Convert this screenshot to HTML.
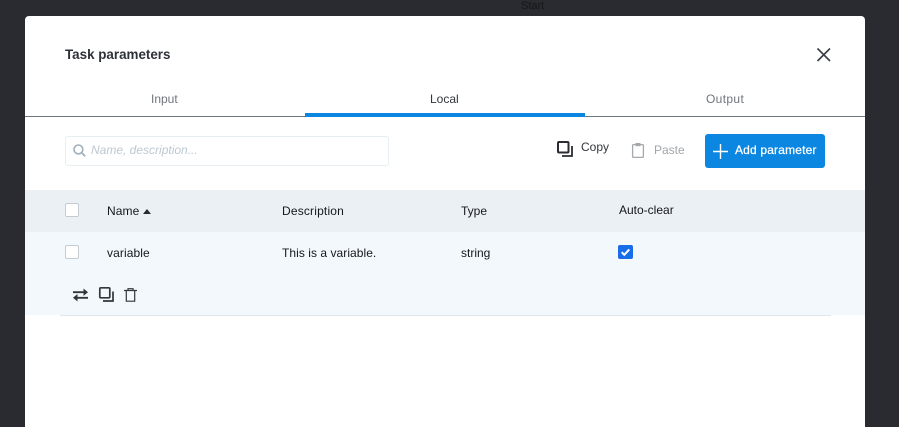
<!DOCTYPE html>
<html>
<head>
<meta charset="utf-8">
<style>
html,body{margin:0;padding:0;width:899px;height:427px;overflow:hidden;background:#2a2b30;font-family:"Liberation Sans",sans-serif;}
.a{position:absolute;white-space:nowrap;line-height:16px;}
#m{position:absolute;left:25px;top:16px;width:840px;height:411px;background:#fff;border-radius:4px 4px 0 0;}
.cb{position:absolute;left:65px;width:12px;height:12px;background:#fff;border:1px solid #c3ccd3;border-radius:2px;}
.t{font-size:12px;color:#15181c;}
svg{position:absolute;overflow:visible;}
</style>
</head>
<body>
<div class="a" style="left:521px;top:-2px;font-size:11px;color:#1a1b1e;-webkit-text-stroke:.2px #1a1b1e;">Start</div>
<div id="m"></div>

<div class="a" style="left:65px;top:47px;font-size:13.4px;font-weight:bold;color:#2e3138;">Task parameters</div>
<svg style="left:817px;top:48px" width="13" height="13" viewBox="0 0 13 13"><path d="M.5.5l12.500 12.500M13 .5L.5 13" stroke="#3a3d44" stroke-width="1.600" fill="none"/></svg>

<div class="a" style="left:151px;top:91px;font-size:12px;color:#70757b;">Input</div>
<div class="a" style="left:430px;top:91px;font-size:12px;color:#33363c;">Local</div>
<div class="a" style="left:706px;top:91px;font-size:12px;color:#70757b;letter-spacing:.35px;">Output</div>
<div style="position:absolute;left:25px;top:116px;width:840px;height:1px;background:#6f7780;"></div>
<div style="position:absolute;left:305px;top:113px;width:280px;height:4px;background:#0b87e2;"></div>

<div style="position:absolute;left:65px;top:136px;width:322px;height:28px;border:1px solid #e8eff3;border-radius:3px;background:#fff;"></div>
<svg style="left:73px;top:144px" width="13" height="13" viewBox="0 0 13 13"><circle cx="5.400" cy="5.400" r="4.400" stroke="#9fb0bb" stroke-width="1.600" fill="none"/><path d="M8.600 8.600l3.600 3.600" stroke="#9fb0bb" stroke-width="1.800" fill="none"/></svg>
<div class="a" style="left:91px;top:142px;font-size:12px;font-style:italic;color:#bcc8d1;">Name, description...</div>

<svg style="left:557px;top:141px" width="16" height="16" viewBox="0 0 16 16"><rect x="1" y="1" width="10.500" height="10.500" rx="1" stroke="#2a2c31" stroke-width="2" fill="none"/><path d="M15 5v10H5" stroke="#2a2c31" stroke-width="1.800" fill="none"/></svg>
<div class="a" style="left:581px;top:139px;font-size:12px;color:#33363c;">Copy</div>

<svg style="left:632px;top:143px" width="12" height="15" viewBox="0 0 12 15"><rect x=".6" y="1.600" width="10.800" height="12.800" rx="1" stroke="#a5a8ac" stroke-width="1.300" fill="none"/><rect x="3.500" y="0" width="5" height="3.200" fill="#a5a8ac"/></svg>
<div class="a" style="left:654px;top:142px;font-size:12px;color:#a2a6aa;">Paste</div>

<div style="position:absolute;left:705px;top:134px;width:120px;height:34px;background:#0b87e2;border-radius:3px;"></div>
<svg style="left:713px;top:144px" width="15" height="15" viewBox="0 0 15 15"><path d="M7.500 0v15M0 7.500h15" stroke="#fff" stroke-width="1.400" fill="none"/></svg>
<div class="a" style="left:735px;top:142px;font-size:12px;color:#fff;letter-spacing:.17px;-webkit-text-stroke:.25px #fff;">Add parameter</div>

<div style="position:absolute;left:25px;top:190px;width:840px;height:42px;background:#eaf0f3;"></div>
<div style="position:absolute;left:25px;top:232px;width:840px;height:83px;background:#f3f8fc;"></div>
<div style="position:absolute;left:60px;top:315px;width:771px;height:1px;background:#dfe7eb;"></div>

<div class="cb" style="top:203px"></div>
<div class="a t" style="left:107px;top:203px;letter-spacing:.1px;">Name</div>
<svg style="left:143px;top:209px" width="8" height="5" viewBox="0 0 8 5"><path d="M4 0l4 5H0z" fill="#2a2c31"/></svg>
<div class="a t" style="left:282px;top:203px;letter-spacing:.18px;">Description</div>
<div class="a t" style="left:461px;top:203px;">Type</div>
<div class="a t" style="left:619px;top:202px;">Auto-clear</div>

<div class="cb" style="top:245px"></div>
<div class="a t" style="left:107px;top:245px;letter-spacing:.1px;">variable</div>
<div class="a t" style="left:282px;top:245px;letter-spacing:.05px;">This is a variable.</div>
<div class="a t" style="left:461px;top:245px;">string</div>
<div style="position:absolute;left:618px;top:245px;width:15px;height:14px;background:#1a6de8;border-radius:2px;"></div>
<svg style="left:618px;top:245px" width="15" height="14" viewBox="0 0 15 14"><path d="M3.700 7.200l2.600 2.600 5-5.400" stroke="#fff" stroke-width="2" fill="none"/></svg>

<svg style="left:73px;top:288px" width="15" height="14" viewBox="0 0 15 14"><path d="M0 4.200h11.500M3.500 9.800H15" stroke="#33363c" stroke-width="1.800" fill="none"/><path d="M10.500 .5l4.500 3.700-4.500 3.700z" fill="#33363c"/><path d="M4.500 6l-4.500 3.800 4.500 3.700z" fill="#33363c"/></svg>
<svg style="left:99px;top:287px" width="15" height="15" viewBox="0 0 15 15"><rect x=".8" y=".8" width="10" height="10" rx="1" stroke="#33363c" stroke-width="1.700" fill="none"/><path d="M14 4.500V14H4" stroke="#33363c" stroke-width="1.700" fill="none"/></svg>
<svg style="left:124px;top:288px" width="13" height="14" viewBox="0 0 13 14"><path d="M0 2.500h13M4 2.500V.7h5v1.800M2.300 2.500v10.700h8.400V2.500" stroke="#33363c" stroke-width="1.200" fill="none"/></svg>
</body>
</html>
